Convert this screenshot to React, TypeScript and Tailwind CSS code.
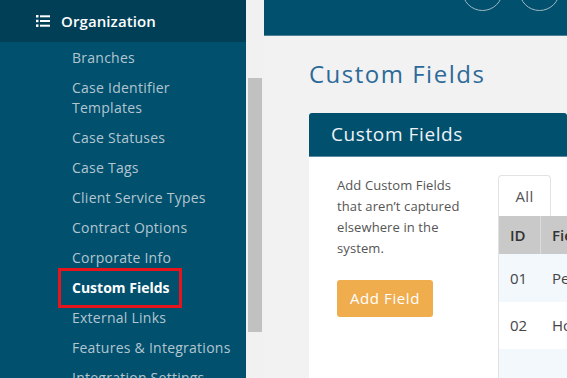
import React from "react";

const items = [
  "Branches",
  "Case Identifier Templates",
  "Case Statuses",
  "Case Tags",
  "Client Service Types",
  "Contract Options",
  "Corporate Info",
  "Custom Fields",
  "External Links",
  "Features & Integrations",
  "Integration Settings",
];

export default function App() {
  return (
    <div
      className="flex w-[567px] h-[378px] overflow-hidden bg-[#f2f2f2]"
      style={{ fontFamily: "'Open Sans', 'Liberation Sans', sans-serif" }}
    >
      {/* Sidebar */}
      <div className="w-[246px] shrink-0 bg-[#01506e] flex flex-col">
        <div className="h-[42px] bg-[#013f57] flex items-center pl-[36px] gap-[11px] shrink-0">
          <svg width="14" height="12" viewBox="0 0 14 12" fill="#fff">
            <rect x="0" y="0" width="2.5" height="2.5" />
            <rect x="4" y="0.3" width="10" height="2" />
            <rect x="0" y="4.7" width="2.5" height="2.5" />
            <rect x="4" y="5" width="10" height="2" />
            <rect x="0" y="9.4" width="2.5" height="2.5" />
            <rect x="4" y="9.7" width="10" height="2" />
          </svg>
          <span className="text-white text-[15px] font-semibold tracking-[0.1px]">Organization</span>
        </div>
        <div className="flex flex-col pt-[6px] gap-[10px]">
          {items.map((it) => {
            const active = it === "Custom Fields";
            return (
              <div key={it} className="pl-[72px] pr-[8px]">
                {active ? (
                  <div className="-ml-[14px] w-[124px] h-[40px] border-[3px] border-[#e8141b] flex items-center pl-[11px] -my-[10px]">
                    <span className="text-white font-bold text-[14px] leading-[20px]">{it}</span>
                  </div>
                ) : it.startsWith("Case Identifier") ? (
                  <div className="text-[#b3c6d0] text-[14px] leading-[20px] tracking-[0.25px] w-[110px]">{it}</div>
                ) : (
                  <div className="text-[#b3c6d0] text-[14px] leading-[20px] tracking-[0.25px] whitespace-nowrap">{it}</div>
                )}
              </div>
            );
          })}
        </div>
      </div>
      {/* Scrollbar */}
      <div className="w-[18px] shrink-0 bg-[#f1f1f1] pt-[78px] pl-[2px]">
        <div className="w-[14px] h-[254px] bg-[#c1c1c1]" />
      </div>
      {/* Main */}
      <div className="flex-1 flex flex-col min-w-0">
        <div className="h-[36px] bg-[#01506e] border-b border-[#4d7f95] relative overflow-hidden shrink-0">
          <div className="absolute left-[198px] top-[-30px] w-[41px] h-[41px] rounded-full border border-[#9fb9c6]" />
          <div className="absolute left-[255px] top-[-30px] w-[41px] h-[41px] rounded-full border border-[#9fb9c6]" />
        </div>
        <div className="pl-[45px] pt-[23px]">
          <div className="text-[#2d6a99] text-[24px] leading-[30px] font-normal tracking-[1.5px]">Custom Fields</div>
          <div className="mt-[24px] bg-white rounded-t-[3px] overflow-hidden">
            <div className="h-[44px] bg-[#01506e] flex items-center pl-[22px] border-b border-[#5d8aa0]">
              <span className="text-[#eef3f6] text-[19px] tracking-[0.6px]">Custom Fields</span>
            </div>
            <div className="flex pl-[28px] pt-[18px] h-[240px]">
              <div className="w-[132px] shrink-0">
                <p className="text-[#555] text-[13px] leading-[21px] tracking-[0.1px]">
                  Add Custom Fields that aren’t captured elsewhere in the system.
                </p>
                <button className="mt-[21px] w-[96px] h-[37px] bg-[#f0ad4e] rounded-[3px] text-white text-[15px] tracking-[0.6px]">
                  Add Field
                </button>
              </div>
              <div className="ml-[29px] flex-1 flex flex-col">
                <div className="w-[53px] h-[44px] border border-[#e2e2e2] border-b-0 rounded-t-[4px] flex items-center justify-center text-[#555] text-[15px] bg-white tracking-[0.3px]">
                  All
                </div>
                <div className="border-l border-[#e2e2e2]">
                  <div className="flex h-[38px] bg-[#c9c9c9] items-center text-[#333] text-[15px] font-semibold">
                    <div className="w-[42px] pl-[11px] h-full flex items-center border-r border-[#dcdcdc]">ID</div>
                    <div className="pl-[11px]">Field</div>
                  </div>
                  <div className="flex h-[48px] bg-[#f3f8fd] items-center text-[#444] text-[15px]">
                    <div className="w-[42px] pl-[11px]">01</div>
                    <div className="pl-[11px]">Pending</div>
                  </div>
                  <div className="flex h-[47px] bg-white items-center text-[#444] text-[15px]">
                    <div className="w-[42px] pl-[11px]">02</div>
                    <div className="pl-[11px]">Home</div>
                  </div>
                  <div className="h-[48px] bg-[#f3f8fd]" />
                </div>
              </div>
            </div>
          </div>
        </div>
      </div>
    </div>
  );
}
